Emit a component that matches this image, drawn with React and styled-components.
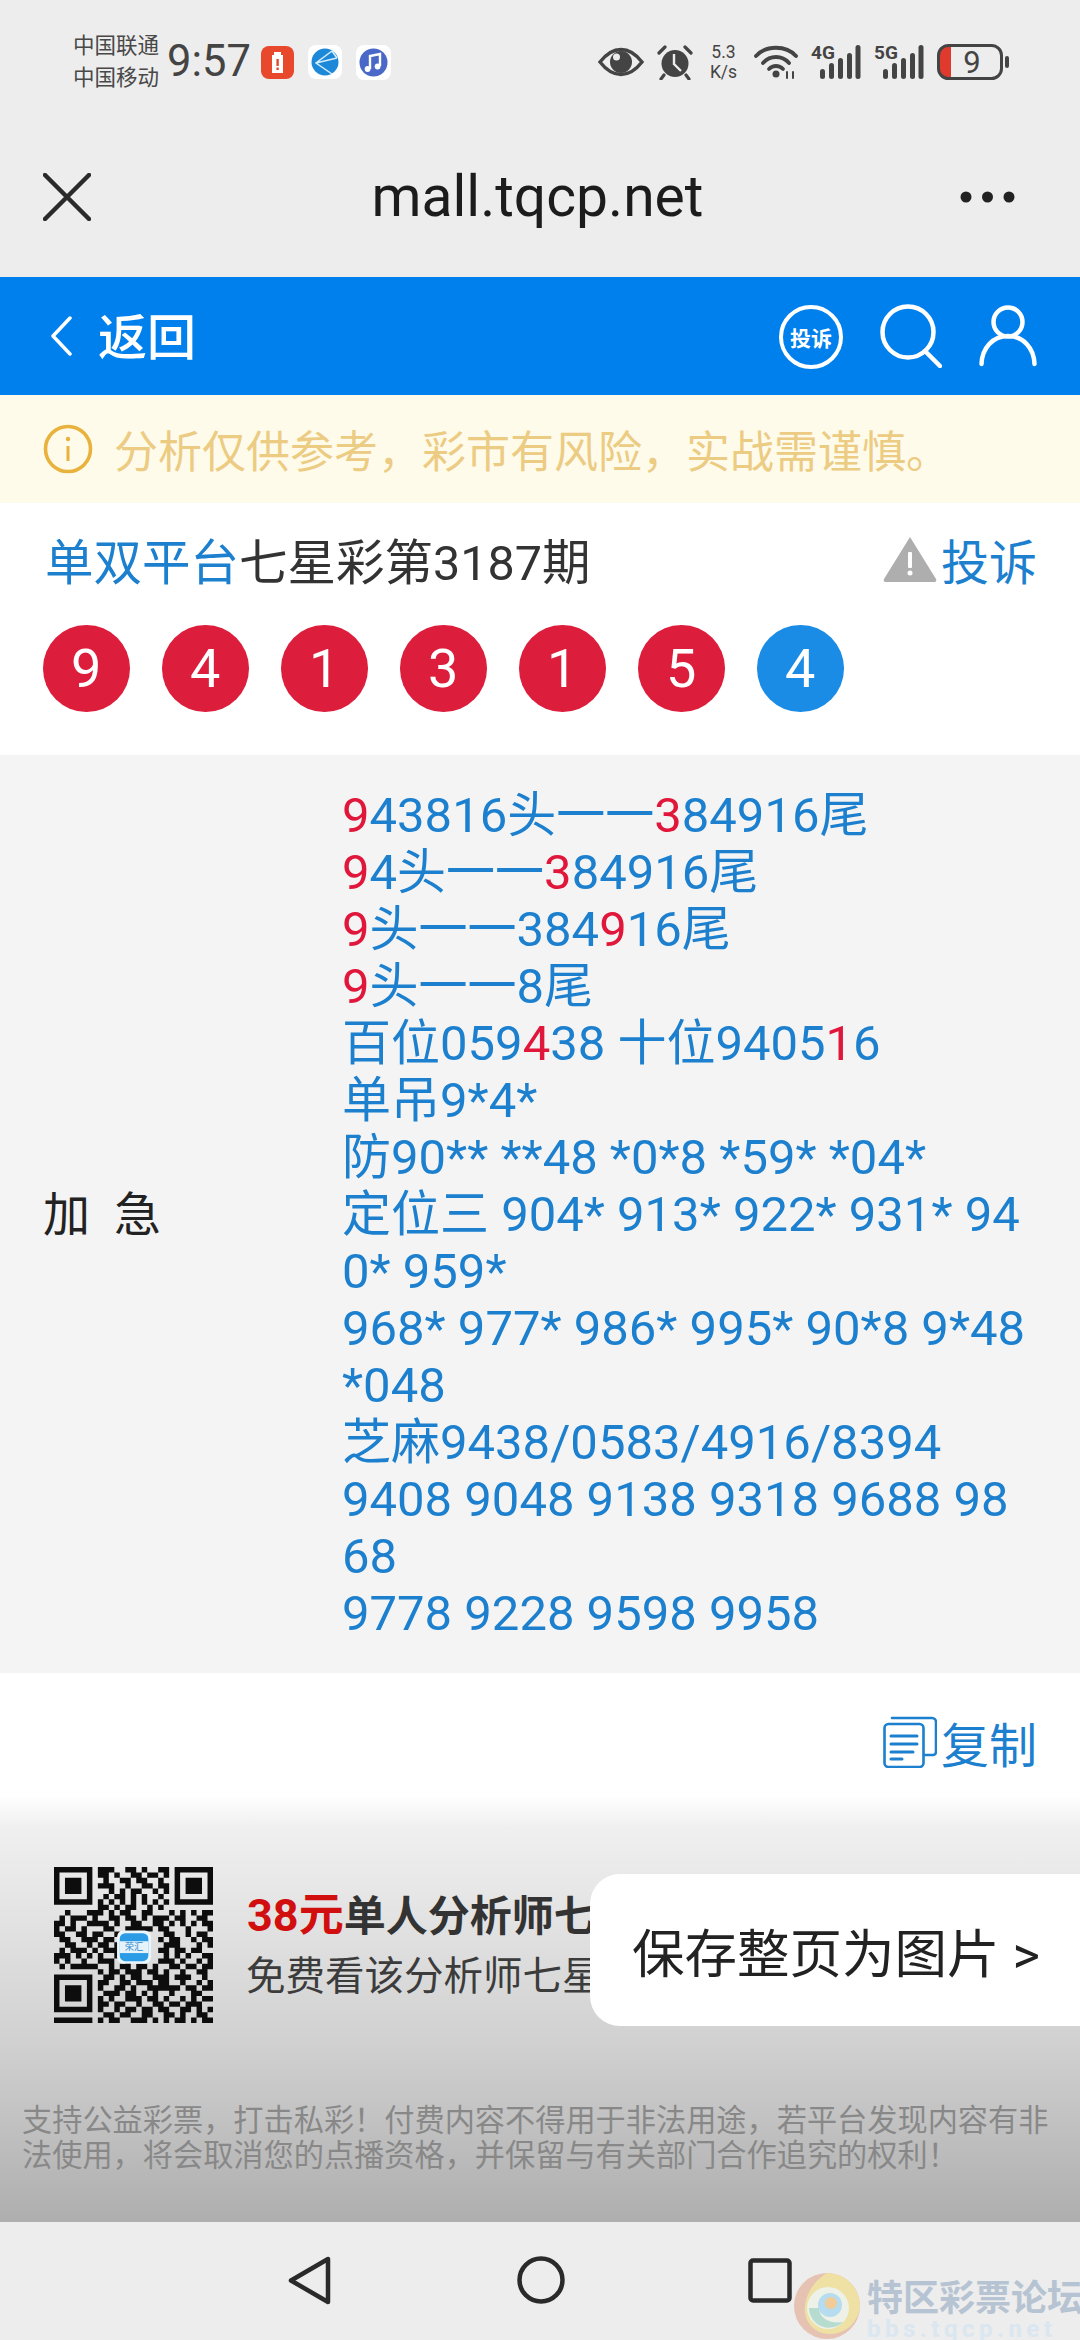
import React from "react";
import styled, { createGlobalStyle } from "styled-components";

const FONT = `Roboto, "Noto Sans CJK SC", "Noto Sans", sans-serif`;

const Global = createGlobalStyle`
  html, body { margin: 0; padding: 0; background: #fff; }
  body { font-family: ${FONT}; }
  * { box-sizing: border-box; }
`;

const Page = styled.div`
  position: relative;
  width: 1080px;
  height: 2340px;
  overflow: hidden;
  display: flex;
  flex-direction: column;
`;

const TopChrome = styled.header`
  background: #ededed;
  height: 277px;
  flex: none;
`;

const StatusBar = styled.div`
  height: 124px;
  display: flex;
  align-items: center;
  padding: 0 71px 0 73px;
  color: #444;
`;

const Carrier = styled.div`
  width: 86px;
  margin-right: 8px;
  font-size: 21.5px;
  line-height: 32px;
  white-space: nowrap;
  color: #484848;
`;

const Clock = styled.div`
  font-size: 43.5px;
  line-height: 1;
  width: 81px;
  margin-right: 13px;
  color: #444;
`;

const NotifIcons = styled.div`
  display: flex;
  align-items: center;
  gap: 14px;
`;

const StatusIcons = styled.div`
  margin-left: auto;
  display: flex;
  align-items: center;
  gap: 13px;
`;

const Speed = styled.div`
  font-size: 17.5px;
  line-height: 20px;
  text-align: center;
  width: 35px;
  color: #444;
`;

const BrowserBar = styled.div`
  height: 153px;
  display: flex;
  align-items: center;
  justify-content: space-between;
  padding: 0 65px 8px 43px;
`;

const BrowserTitle = styled.div`
  font-size: 57px;
  font-weight: 400;
  color: #1c1c1c;
  margin-left: 24px;
`;

const BlueBar = styled.nav`
  height: 118px;
  flex: none;
  background: #0080ed;
  display: flex;
  align-items: center;
  padding: 0 43px 0 50px;
  color: #fff;
`;

const BackLabel = styled.div`
  font-size: 49px;
  font-weight: 500;
  margin-left: 26px;
  margin-bottom: 6px;
`;

const BlueActions = styled.div`
  margin-left: auto;
  display: flex;
  align-items: center;
  gap: 37px;
`;

const ComplainBadge = styled.div`
  width: 64px;
  height: 64px;
  margin-top: 2px;
  border: 4px solid #fff;
  border-radius: 50%;
  display: flex;
  align-items: center;
  justify-content: center;
  font-size: 21px;
  font-weight: 700;
  color: #fff;
  white-space: nowrap;
`;

const Notice = styled.div`
  height: 108px;
  flex: none;
  background: #fffbeb;
  display: flex;
  align-items: center;
  padding: 0 0 0 43px;
  gap: 21px;
  font-size: 44px;
  color: #eccb83;
  white-space: nowrap;
`;

const TitleSection = styled.section`
  height: 252px;
  flex: none;
  background: #fff;
  padding: 29px 43px 0 43px;
`;

const TitleRow = styled.div`
  display: flex;
  align-items: center;
  justify-content: space-between;
  height: 54px;
  padding-left: 2px;
`;

const IssueTitle = styled.div`
  font-size: 48.5px;
  color: #333;
  white-space: nowrap;
`;

const Platform = styled.span`
  color: #1c80cf;
`;

const ActionLink = styled.div`
  display: flex;
  align-items: center;
  gap: 4px;
  font-size: 48px;
  color: #1c80cf;
`;

const Balls = styled.div`
  display: flex;
  gap: 32.5px;
  margin-top: 39px;
`;

const Ball = styled.div`
  width: 86.5px;
  height: 86.5px;
  border-radius: 50%;
  background: ${(p) => (p.$blue ? "#1a8ce6" : "#dc1e3c")};
  color: #fff;
  display: flex;
  align-items: center;
  justify-content: center;
  font-size: 54px;
  font-weight: 400;
`;

const Analysis = styled.section`
  height: 918px;
  flex: none;
  background: #f4f4f4;
  display: flex;
  align-items: center;
  padding-left: 43px;
`;

const RowLabel = styled.div`
  width: 299px;
  flex: none;
  font-size: 47px;
  color: #222;
  margin-bottom: 8px;
  display: flex;
  gap: 24px;
`;

const Lines = styled.div`
  font-size: 49px;
  line-height: 57px;
  margin-top: 1px;
  color: #1c80cf;
  white-space: pre;
`;

const Line = styled.div``;

const Hit = styled.span`
  color: #e0173a;
`;

const Lower = styled.div`
  flex: 1;
  display: flex;
  flex-direction: column;
  background: linear-gradient(180deg, #fff 0, #fff 122px, #f0f0f0 154px, #d0d0d0 374px, #aeaeae 549px);
`;

const CopyRow = styled.div`
  height: 140px;
  flex: none;
  display: flex;
  justify-content: flex-end;
  padding: 34px 43px 0 0;
  align-items: flex-start;
`;

const Promo = styled.div`
  display: flex;
  align-items: flex-start;
  padding: 54px 0 0 54px;
  gap: 34px;
  height: 290px;
  flex: none;
  overflow: hidden;
`;

const PromoText = styled.div`
  padding-top: 24px;
  white-space: nowrap;
`;

const PromoHead = styled.div`
  font-size: 42px;
  line-height: 50px;
  font-weight: 700;
  color: #333;
`;

const Price = styled.span`
  font-size: 45px;
  color: #d20f0f;
`;

const PromoSub = styled.div`
  font-size: 39.5px;
  line-height: 50px;
  margin-top: 10px;
  margin-left: -1px;
  color: #3c3c3c;
`;

const Disclaimer = styled.p`
  margin: 0;
  padding: 0 20px 0 22px;
  font-size: 30.2px;
  line-height: 35px;
  color: #888;
`;

const SaveButton = styled.div`
  position: absolute;
  left: 590px;
  top: 1874px;
  width: 490px;
  height: 152px;
  background: #fff;
  border-radius: 30px 0 0 30px;
  display: flex;
  align-items: center;
  padding-left: 42px;
  font-size: 52.5px;
  color: #222;
  white-space: nowrap;
`;

const SystemNav = styled.footer`
  height: 118px;
  flex: none;
  background: #ededed;
  display: flex;
  align-items: center;
  padding: 0 0 0 288px;
  gap: 0;
`;

const NavSlot = styled.div`
  display: flex;
  margin-right: ${(p) => p.$gap}px;
  margin-bottom: 2px;
`;

const Watermark = styled.div`
  position: absolute;
  left: 793px;
  top: 2272px;
  width: 287px;
  height: 68px;
  overflow: hidden;
  display: flex;
  gap: 6px;
  opacity: 0.8;
`;

const WatermarkText = styled.div`
  display: flex;
  flex-direction: column;
  padding-top: 7px;
  white-space: nowrap;
`;

const WatermarkName = styled.div`
  font-size: 36px;
  line-height: 40px;
  font-weight: 700;
  color: #a9b9cc;
`;

const WatermarkUrl = styled.div`
  font-size: 24px;
  line-height: 20px;
  letter-spacing: 4.5px;
  color: #d6e5f1;
  font-weight: 700;
`;

const CloseIcon = () => (
  <svg width="48" height="48" viewBox="0 0 48 48" fill="none" stroke="#2a2a2a" strokeWidth="4.5" strokeLinecap="round">
    <path d="M2 2 46 46M46 2 2 46" />
  </svg>
);

const DotsIcon = () => (
  <svg width="55" height="12" viewBox="0 0 55 12" fill="#222">
    <circle cx="6" cy="6" r="5.5" />
    <circle cx="27.5" cy="6" r="5.5" />
    <circle cx="49" cy="6" r="5.5" />
  </svg>
);

const BatteryAlert = () => (
  <svg width="33" height="33" viewBox="0 0 33 33">
    <rect width="33" height="33" rx="8" fill="#e8482c" />
    <path d="M13 6h7v3h2v18H11V9h2z" fill="#fff" />
    <rect x="15.4" y="13" width="2.4" height="7" fill="#e8482c" />
    <rect x="15.4" y="21.5" width="2.4" height="2.5" fill="#e8482c" />
  </svg>
);

const GlobeTile = () => (
  <svg width="34" height="34" viewBox="0 0 34 34">
    <rect width="34" height="34" rx="8" fill="#fff" />
    <circle cx="17" cy="17" r="13.5" fill="#1e88d8" />
    <path d="M24 6 8 18l16 11M8 18l21-5M24 6l5 7" fill="none" stroke="#d7eefc" strokeWidth="1.5" />
  </svg>
);

const MusicTile = () => (
  <svg width="35" height="35" viewBox="0 0 35 35">
    <rect width="35" height="35" rx="8" fill="#fff" />
    <circle cx="17.5" cy="17.5" r="14" fill="#4a68c8" />
    <path d="M14 24V11l10-2v12" fill="none" stroke="#fff" strokeWidth="2.4" />
    <circle cx="11.6" cy="24" r="2.9" fill="#fff" />
    <circle cx="21.6" cy="21.5" r="2.9" fill="#fff" />
  </svg>
);

const EyeIcon = () => (
  <svg width="46" height="30" viewBox="0 0 46 30">
    <path d="M2 15C9 6 15 2.5 23 2.5S37 6 44 15c-7 9-13 12.500-21 12.500S9 24 2 15Z" fill="none" stroke="#444" strokeWidth="3.4" />
    <circle cx="23" cy="15" r="11" fill="#444" />
    <circle cx="18.500" cy="10" r="3.500" fill="#ededed" />
  </svg>
);

const AlarmIcon = () => (
  <svg width="36" height="36" viewBox="0 0 36 36">
    <circle cx="18" cy="19.500" r="13.500" fill="#444" />
    <path d="M17 10v10l7 7" fill="none" stroke="#ededed" strokeWidth="2.4" />
    <path d="M2 9 8 3M34 9 28 3M7 31l-3 4M29 31l3 4" stroke="#444" strokeWidth="3.200" strokeLinecap="round" />
  </svg>
);

const WifiIcon = () => (
  <svg width="44" height="34" viewBox="0 0 44 34" fill="none" stroke="#444" strokeWidth="3.800" strokeLinecap="round">
    <path d="M2 11C12 0 32 0 42 11" />
    <path d="M9 18C16 10 28 10 35 18" />
    <path d="M15 24c4-4 10-4 14 0" />
    <circle cx="22" cy="29" r="3.500" fill="#444" stroke="none" />
    <path d="M33 33v-6M39 27v6" strokeWidth="2" />
  </svg>
);

const SignalLabel = styled.span`
  position: absolute;
  left: 0;
  top: -1px;
  font-size: 19px;
  line-height: 20px;
  font-weight: 700;
  color: #444;
`;

const SignalWrap = styled.div`
  position: relative;
  width: 50px;
  height: 36px;
  display: flex;
`;

const SignalIcon = ({ label }) => (
  <SignalWrap>
    <svg width="50" height="36" viewBox="0 0 50 36">
      {[[9, 10], [18, 16], [27, 21], [36, 26], [44.5, 34]].map(([x, h]) => (
        <rect key={x} x={x} y={35 - h} width="5" height={h} rx="2.500" fill="#444" />
      ))}
    </svg>
    <SignalLabel>{label}</SignalLabel>
  </SignalWrap>
);

const BatteryIcon = () => (
  <svg width="72" height="36" viewBox="0 0 72 36">
    <path d="M11 2h3v32h-3a9 9 0 0 1-9-9V11a9 9 0 0 1 9-9Z" fill="#e03a2e" />
    <rect x="1.500" y="1.500" width="63" height="33" rx="10" fill="none" stroke="#444" strokeWidth="3" />
    <rect x="68" y="12" width="4" height="12" rx="2" fill="#444" />
    <text x="35" y="29" textAnchor="middle" fontFamily="Roboto, sans-serif" fontSize="31" fill="#444">9</text>
  </svg>
);

const ChevronLeft = () => (
  <svg width="22" height="40" viewBox="0 0 22 40" fill="none" stroke="#fff" strokeWidth="3.500" strokeLinecap="round" strokeLinejoin="round">
    <path d="M20 2 3 20l17 18" />
  </svg>
);

const SearchIcon = () => (
  <svg width="62" height="64" viewBox="0 0 62 64" fill="none" stroke="#fff" strokeWidth="4.500" strokeLinecap="round">
    <circle cx="28" cy="28" r="25.500" />
    <path d="M45 47l15 15" />
  </svg>
);

const UserIcon = () => (
  <svg width="58" height="62" viewBox="0 0 58 62" fill="none" stroke="#fff" strokeWidth="4.500" strokeLinecap="round">
    <circle cx="29" cy="17" r="14.500" />
    <path d="M2.500 59C3 43 14 31 29 31s26 12 26.500 28" />
  </svg>
);

const InfoIcon = () => (
  <svg width="50" height="50" viewBox="0 0 50 50" fill="none" stroke="#e8b23c" strokeWidth="3.600">
    <circle cx="25" cy="25" r="22.500" />
    <path d="M25 22v15" strokeWidth="3" />
    <circle cx="25" cy="15" r="2.200" fill="#e8b23c" stroke="none" />
  </svg>
);

const WarnIcon = () => (
  <svg width="54" height="46" viewBox="0 0 54 46">
    <path d="M27 1 53 43a2 2 0 0 1-2 3H3a2 2 0 0 1-2-3Z" fill="#aeaeae" />
    <rect x="25" y="16" width="4" height="16" rx="1" fill="#fff" />
    <circle cx="27" cy="37" r="2.500" fill="#fff" />
  </svg>
);

const CopyIcon = () => (
  <svg width="54" height="52" viewBox="0 0 54 52" fill="none" stroke="#1c80cf" strokeWidth="2.600" strokeLinecap="round">
    <rect x="1.500" y="8" width="39" height="43" rx="4" />
    <path d="M9 2h40a4 4 0 0 1 4 4v30a3 3 0 0 1-3 3h-9" />
    <path d="M8 20h26M8 28h26M8 36h22M8 43h11" strokeWidth="3" />
  </svg>
);

const QR_ROWS = [
  "11111110111001101001101111111",
  "10000010110100110110101000001",
  "10111010010011011001001011101",
  "10111010111001001101101011101",
  "10111010001010110010101011101",
  "10000010010110101001001000001",
  "11111110101010101010101111111",
  "00000000110101100101000000000",
  "00100011101011001100010101011",
  "01011101001101101011101100110",
  "11010011110100110011010101011",
  "10110100011001111101100010001",
  "11001101100100000000110010110",
  "01100111011000000001011001011",
  "00110010110100000000111000101",
  "01011101011100000001101101100",
  "11101010100110000000101010011",
  "10100100111001000001110100101",
  "01011111001011011010011011011",
  "00000000101101110110100100110",
  "11111110011010110011101110010",
  "10000010110011011101100100101",
  "10111010100110100111111011011",
  "10111010011101101010010001100",
  "10111010101001110110100101011",
  "10000010110110010011011011100",
  "11111110100101101101100110101",
  "00000000011011001100110100110",
  "11111110101100111010101101011",
];

const QrCode = () => {
  const path = QR_ROWS.flatMap((row, y) =>
    row.split("").map((c, x) => (c === "1" ? `M${x} ${y}h1v1h-1z` : ""))
  ).join("");
  return (
    <svg width="159" height="156" viewBox="0 0 29 29" preserveAspectRatio="none" style={{ flex: "none" }}>
      <path d={path} fill="#0d0d0d" />
      <rect x="11.500" y="11.800" width="6.200" height="6.200" rx="1.200" fill="#eaf5fc" />
      <rect x="12" y="12.300" width="5.200" height="5.200" rx="1" fill="#2b9be6" />
      <rect x="12" y="13.800" width="5.200" height="2.200" fill="#e6f3fb" />
      <text x="14.600" y="15.500" textAnchor="middle" fontSize="1.700" fill="#2b88d0" fontFamily={FONT}>荣汇</text>
    </svg>
  );
};

const NavBack = () => (
  <svg width="43" height="49" viewBox="0 0 43 49" fill="none" stroke="#2a2a2a" strokeWidth="4.500" strokeLinejoin="round">
    <path d="M40 3v43L3 24.500Z" />
  </svg>
);

const NavHome = () => (
  <svg width="48" height="48" viewBox="0 0 48 48" fill="none" stroke="#2a2a2a" strokeWidth="4.500">
    <circle cx="24" cy="24" r="21.500" />
  </svg>
);

const NavRecent = () => (
  <svg width="44" height="45" viewBox="0 0 44 45" fill="none" stroke="#2a2a2a" strokeWidth="4.500">
    <rect x="2.500" y="2.500" width="39" height="40" rx="2.500" />
  </svg>
);

const Swirl = () => (
  <svg width="68" height="68" viewBox="0 0 68 68" fill="none" style={{ flex: "none" }}>
    <circle cx="34" cy="34" r="33" fill="#e5b8a4" />
    <path d="M34 1a33 33 0 0 1 33 33 30 30 0 0 1-30 28C20 62 10 48 12 34 14 16 26 6 34 1Z" fill="#f0dd92" />
    <circle cx="35" cy="36" r="21" fill="#eef2e6" />
    <path d="M16 36a20 20 0 0 0 34 14C40 52 26 48 26 36Z" fill="#a9d9c8" />
    <circle cx="37" cy="33" r="12" fill="#a9d8f0" />
    <circle cx="38" cy="31" r="6" fill="#f2c384" />
  </svg>
);

const numbers = [9, 4, 1, 3, 1, 5];

const analysisLines = [
  "{9}43816头一一{3}84916尾",
  "{9}4头一一{3}84916尾",
  "{9}头一一384{9}16尾",
  "{9}头一一8尾",
  "百位059{4}38 十位9405{1}6",
  "单吊9*4*",
  "防90** **48 *0*8 *59* *04*",
  "定位三 904* 913* 922* 931* 94",
  "0* 959*",
  "968* 977* 986* 995* 90*8 9*48",
  "*048",
  "芝麻9438/0583/4916/8394",
  "9408 9048 9138 9318 9688 98",
  "68",
  "9778 9228 9598 9958",
];

const renderLine = (text) =>
  text.split(/(\{.\})/).map((part, i) =>
    part.startsWith("{") ? <Hit key={i}>{part[1]}</Hit> : part
  );

export default function App() {
  return (
    <>
      <Global />
      <Page>
        <TopChrome>
          <StatusBar>
            <Carrier>
              <div>中国联通</div>
              <div>中国移动</div>
            </Carrier>
            <Clock>9:57</Clock>
            <NotifIcons>
              <BatteryAlert />
              <GlobeTile />
              <MusicTile />
            </NotifIcons>
            <StatusIcons>
              <EyeIcon />
              <AlarmIcon />
              <Speed>
                <div>5.3</div>
                <div>K/s</div>
              </Speed>
              <WifiIcon />
              <SignalIcon label="4G" />
              <SignalIcon label="5G" />
              <BatteryIcon />
            </StatusIcons>
          </StatusBar>
          <BrowserBar>
            <CloseIcon />
            <BrowserTitle>mall.tqcp.net</BrowserTitle>
            <DotsIcon />
          </BrowserBar>
        </TopChrome>

        <BlueBar>
          <ChevronLeft />
          <BackLabel>返回</BackLabel>
          <BlueActions>
            <ComplainBadge>投诉</ComplainBadge>
            <SearchIcon />
            <UserIcon />
          </BlueActions>
        </BlueBar>

        <Notice>
          <InfoIcon />
          <span>分析仅供参考，彩市有风险，实战需谨慎。</span>
        </Notice>

        <TitleSection>
          <TitleRow>
            <IssueTitle>
              <Platform>单双平台</Platform>七星彩第3187期
            </IssueTitle>
            <ActionLink>
              <WarnIcon />
              投诉
            </ActionLink>
          </TitleRow>
          <Balls>
            {numbers.map((n, i) => (
              <Ball key={i}>{n}</Ball>
            ))}
            <Ball $blue>4</Ball>
          </Balls>
        </TitleSection>

        <Analysis>
          <RowLabel>
            <span>加</span>
            <span>急</span>
          </RowLabel>
          <Lines>
            {analysisLines.map((l, i) => (
              <Line key={i}>{renderLine(l)}</Line>
            ))}
          </Lines>
        </Analysis>

        <Lower>
          <CopyRow>
            <ActionLink>
              <CopyIcon />
              复制
            </ActionLink>
          </CopyRow>
          <Promo>
            <QrCode />
            <PromoText>
              <PromoHead>
                <Price>38元</Price>单人分析师七星
              </PromoHead>
              <PromoSub>免费看该分析师七星彩</PromoSub>
            </PromoText>
          </Promo>
          <Disclaimer>
            支持公益彩票，打击私彩！付费内容不得用于非法用途，若平台发现内容有非法使用，将会取消您的点播资格，并保留与有关部门合作追究的权利！
          </Disclaimer>
        </Lower>

        <SystemNav>
          <NavSlot $gap={186}><NavBack /></NavSlot>
          <NavSlot $gap={183}><NavHome /></NavSlot>
          <NavSlot $gap={0}><NavRecent /></NavSlot>
        </SystemNav>

        <SaveButton>保存整页为图片 &gt;</SaveButton>

        <Watermark>
          <Swirl />
          <WatermarkText>
            <WatermarkName>特区彩票论坛</WatermarkName>
            <WatermarkUrl>bbs.tqcp.net</WatermarkUrl>
          </WatermarkText>
        </Watermark>
      </Page>
    </>
  );
}
